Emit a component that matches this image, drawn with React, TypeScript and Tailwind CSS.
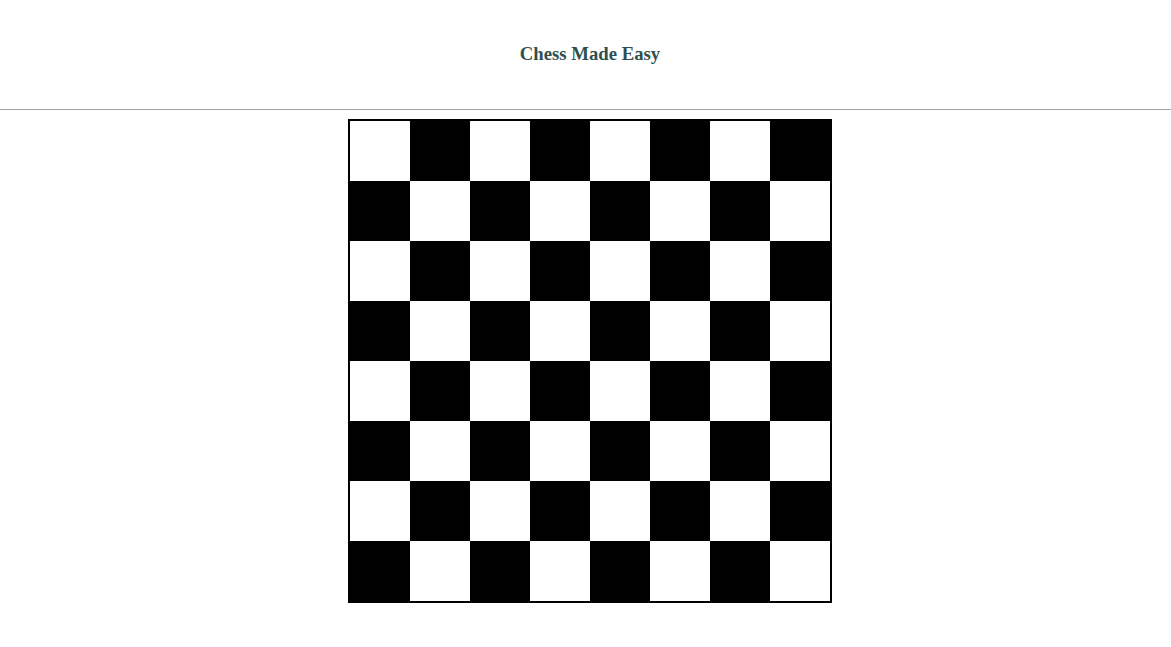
export default function App() {
  const rows = Array.from({ length: 8 }, (_, r) => r);
  const cols = Array.from({ length: 8 }, (_, c) => c);

  return (
    <div className="min-h-screen bg-white" style={{ fontFamily: '"Liberation Serif", "Times New Roman", serif' }}>
      {/* Header */}
      <header className="h-[109px] flex items-center justify-center pl-[9px]">
        <h3 className="text-[18.72px] font-bold text-[#2f4f4f]">Chess Made Easy</h3>
      </header>
      <div className="h-px bg-[#a0a0a0]" />

      {/* Board */}
      <div className="flex justify-center pt-[9px] pl-[9px]">
        <div className="border-2 border-black grid grid-cols-8 w-[484px]">
          {rows.map((r) =>
            cols.map((c) => (
              <div
                key={`${r}-${c}`}
                className={(r + c) % 2 === 0 ? "h-[60px] bg-white" : "h-[60px] bg-black"}
              />
            ))
          )}
        </div>
      </div>
    </div>
  );
}
